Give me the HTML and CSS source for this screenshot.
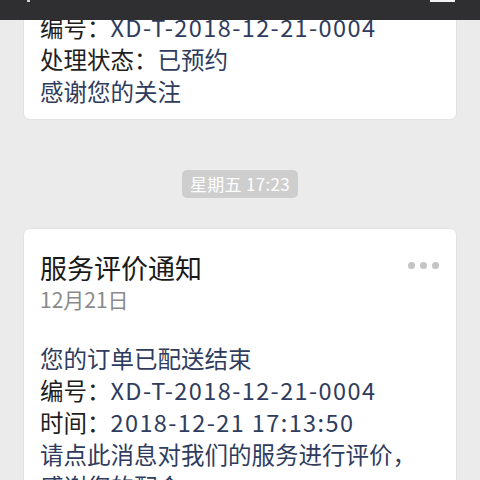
FILE: index.html
```html
<!DOCTYPE html>
<html lang="zh-CN">
<head>
<meta charset="utf-8">
<link rel="stylesheet" href="styles.css">
</head>
<body>
<div class="topbar"><span class="dot-w"></span><span class="bat"></span></div>
<main class="chat">
  <section class="card card-first">
    <p class="line"><span>编号：</span><span class="navy latin">XD-T-2018-12-21-0004</span></p>
    <p class="line"><span>处理状态：</span><span class="navy">已预约</span></p>
    <p class="line navy">感谢您的关注</p>
  </section>
  <div class="time"><span class="pill">星期五 17:23</span></div>
  <section class="card card-second">
    <div class="head">
      <h2 class="title">服务评价通知</h2>
      <div class="more"><i></i><i></i><i></i></div>
    </div>
    <p class="date">12月21日</p>
    <div class="body">
      <p class="line navy">您的订单已配送结束</p>
      <p class="line"><span>编号：</span><span class="navy latin">XD-T-2018-12-21-0004</span></p>
      <p class="line"><span>时间：</span><span class="navy latin">2018-12-21 17:13:50</span></p>
      <p class="line navy">请点此消息对我们的服务进行评价，</p>
      <p class="line navy">感谢您的配合</p>
    </div>
  </section>
</main>
</body>
</html>
```
FILE: styles.css
```css
html, body {
  margin: 0;
  padding: 0;
  height: 480px;
  overflow: hidden;
  background: #ebebeb;
  font-family: "Noto Sans CJK SC", "Noto Sans", sans-serif;
  color: #1e1e1e;
}
.topbar {
  position: absolute;
  top: 0;
  left: 0;
  right: 0;
  height: 20px;
  background: #2f2f31;
  z-index: 5;
}
.topbar .dot-w {
  position: absolute;
  left: 27px;
  top: 0;
  width: 3px;
  height: 2px;
  background: #cfcfcf;
}
.topbar .bat {
  position: absolute;
  left: 430px;
  top: 0;
  width: 25px;
  height: 2px;
  background: #f2f2f2;
}
.chat {
  display: flex;
  flex-direction: column;
}
.card {
  margin: 0 23px;
  background: #fff;
  border: 1px solid #e2e2e2;
  border-radius: 7px;
  padding: 0 16px;
}
.card-first {
  margin-top: -37px;
  padding-top: 47px;
  padding-bottom: 12px;
}
.line {
  margin: 0;
  font-size: 23.5px;
  line-height: 32px;
  white-space: nowrap;
}
.navy { color: #2f3c5d; }
.latin { letter-spacing: 1.4px; }
.time {
  display: flex;
  justify-content: center;
  margin: 50px 0 30px;
}
.pill {
  display: inline-block;
  background: #cecece;
  color: #fff;
  font-size: 17px;
  line-height: 28px;
  height: 28px;
  padding: 0 8px;
  border-radius: 5px;
  letter-spacing: 0.3px;
}
.card-second {
  padding-top: 22px;
  padding-bottom: 20px;
}
.head {
  display: flex;
  justify-content: space-between;
  align-items: center;
}
.title {
  margin: 0;
  font-size: 27px;
  line-height: 34px;
  font-weight: 400;
  color: #1a1a1a;
}
.more {
  display: flex;
  gap: 5px;
  margin-right: 1px;
  margin-top: -5px;
}
.more i {
  width: 7px;
  height: 7px;
  border-radius: 50%;
  background: #c4c4c4;
}
.date {
  margin: 0;
  font-size: 21px;
  line-height: 28px;
  color: #8a8a8a;
}
.body {
  margin-top: 29px;
}
```
